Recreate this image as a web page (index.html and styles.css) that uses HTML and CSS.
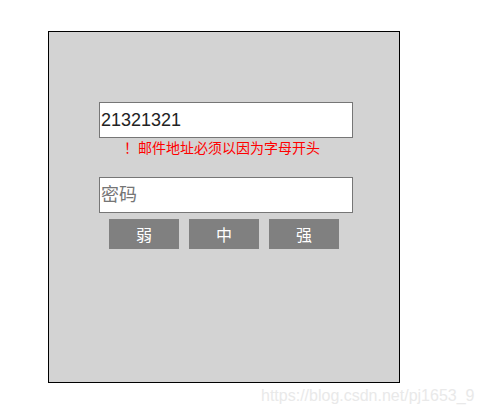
FILE: index.html
```html
<!DOCTYPE html>
<html lang="zh">
<head>
<meta charset="utf-8">
<title>注册</title>
<link rel="stylesheet" href="styles.css">
</head>
<body>
<div class="page">
  <div class="box">
    <input class="field" type="text" value="21321321">
    <div class="error">！邮件地址必须以因为字母开头</div>
    <input class="field" type="password" placeholder="密码">
    <div class="levels">
      <div class="level">弱</div>
      <div class="level">中</div>
      <div class="level">强</div>
    </div>
  </div>
  <div class="watermark">https://blog.csdn.net/pj1653_9</div>
</div>
</body>
</html>
```

FILE: styles.css
```css
html, body {
  margin: 0;
  padding: 0;
  background: #fff;
}

.page {
  position: relative;
  width: 482px;
  height: 414px;
  padding: 31px 0 0 48px;
  box-sizing: border-box;
  font-family: "Liberation Sans", "Noto Sans CJK SC", sans-serif;
}

.box {
  width: 352px;
  height: 352px;
  box-sizing: border-box;
  border: 1px solid #000;
  background: #d3d3d3;
  padding: 70px 0 0 50px;
}

.field {
  display: block;
  width: 254px;
  height: 36px;
  box-sizing: border-box;
  margin: 0;
  padding: 0 2px 0 1px;
  border: 1px solid #767676;
  background: #fff;
  font-family: "Liberation Sans", "Noto Sans CJK SC", sans-serif;
  font-size: 18px;
  color: #222;
  outline: none;
}

.field::placeholder {
  color: #757575;
  font-family: "Noto Sans CJK SC", sans-serif;
}

.error {
  height: 18px;
  line-height: 18px;
  margin: 0 0 21px 0;
  padding-left: 25px;
  font-family: "Noto Sans CJK SC", sans-serif;
  font-size: 14px;
  color: #ff0000;
  white-space: nowrap;
}

.levels {
  display: flex;
  gap: 10px;
  margin: 6px 0 0 10px;
}

.level {
  width: 70px;
  height: 30px;
  line-height: 30px;
  background: #808080;
  color: #fff;
  text-align: center;
  font-family: "Noto Sans CJK SC", sans-serif;
  font-size: 16px;
}

.watermark {
  position: absolute;
  left: 261px;
  top: 387px;
  font-family: "Liberation Sans", sans-serif;
  font-size: 16px;
  line-height: 18px;
  color: #e9e9e9;
  white-space: nowrap;
}
```
